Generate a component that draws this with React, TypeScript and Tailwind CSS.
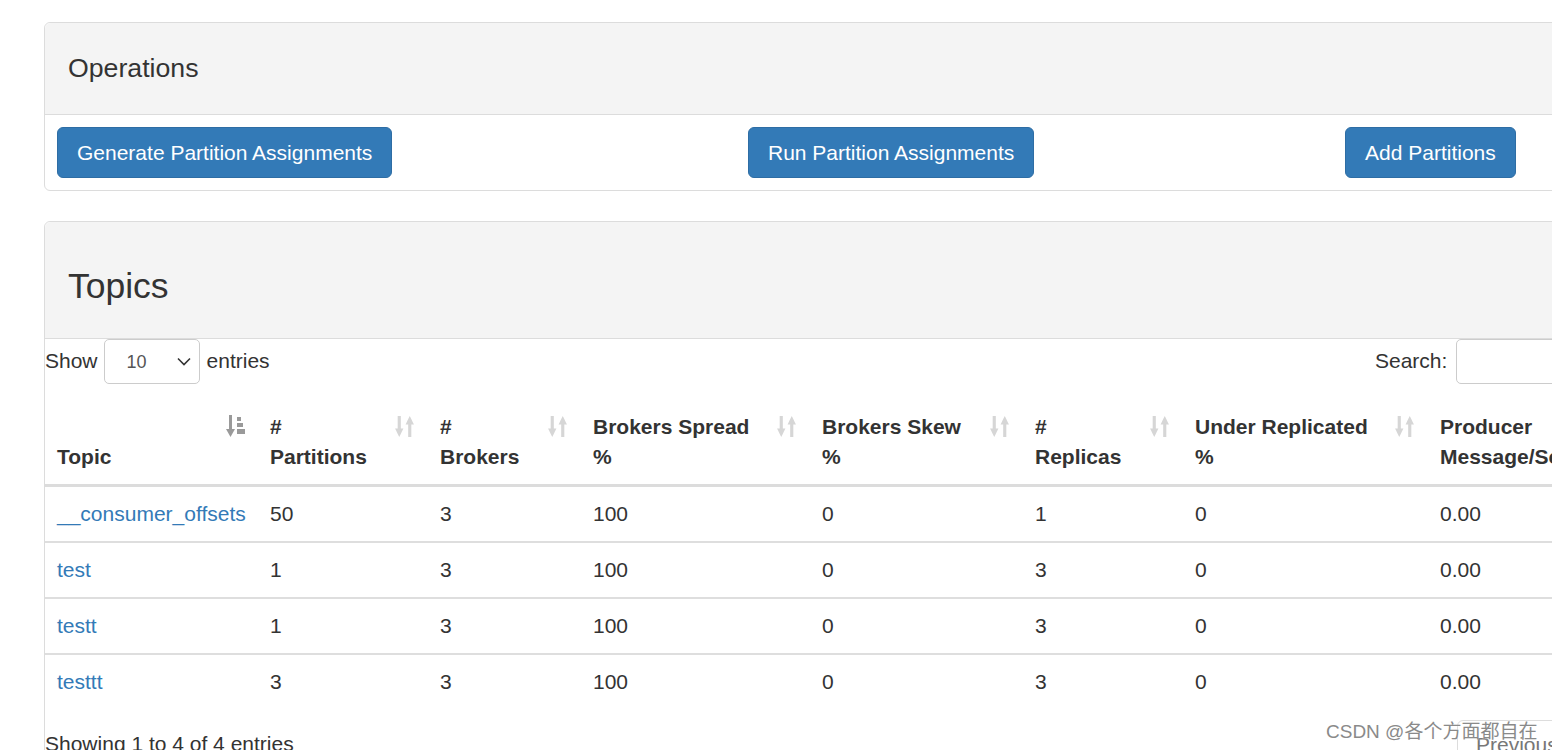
import React from 'react';

const topics = [
  { name: '__consumer_offsets', partitions: 50, brokers: 3, spread: 100, skew: 0, replicas: 1, under: 0, producer: '0.00' },
  { name: 'test', partitions: 1, brokers: 3, spread: 100, skew: 0, replicas: 3, under: 0, producer: '0.00' },
  { name: 'testt', partitions: 1, brokers: 3, spread: 100, skew: 0, replicas: 3, under: 0, producer: '0.00' },
  { name: 'testtt', partitions: 3, brokers: 3, spread: 100, skew: 0, replicas: 3, under: 0, producer: '0.00' },
];

const SortIcon = () => (
  <svg width="19" height="21" viewBox="0 0 18 20" fill="#d6d6d6" className="absolute top-[16px] right-[14px]">
    <rect x="2.5" y="0" width="3" height="13" />
    <polygon points="0,12 8,12 4,20" />
    <polygon points="10,8 18,8 14,0" />
    <rect x="12.5" y="7" width="3" height="13" />
  </svg>
);

const SortActiveIcon = () => (
  <svg width="20" height="22" viewBox="0 0 20 22" fill="#9a9a9a" className="absolute top-[15px] right-[12px]">
    <rect x="3" y="0" width="3" height="15" />
    <polygon points="0,14 9,14 4.5,22" />
    <rect x="11" y="2" width="4" height="4" />
    <rect x="11" y="8" width="6" height="4" />
    <rect x="11" y="14" width="8" height="5" />
  </svg>
);

const Button = ({ children }: { children: React.ReactNode }) => (
  <button className="h-[51px] px-[19px] rounded-[6px] bg-[#337ab7] border border-[#2e6da4] text-white text-[21px] leading-[30px] whitespace-nowrap">
    {children}
  </button>
);

const headers: { label: React.ReactNode; width: string; active?: boolean }[] = [
  { label: 'Topic', width: 'w-[213px]', active: true },
  { label: <>#<br />Partitions</>, width: 'w-[170px]' },
  { label: <>#<br />Brokers</>, width: 'w-[153px]' },
  { label: <>Brokers Spread<br />%</>, width: 'w-[229px]' },
  { label: <>Brokers Skew<br />%</>, width: 'w-[213px]' },
  { label: <>#<br />Replicas</>, width: 'w-[160px]' },
  { label: <>Under Replicated<br />%</>, width: 'w-[245px]' },
  { label: <>Producer<br />Message/Sec</>, width: 'w-[230px]' },
  { label: <>Summed Recent<br />Offsets</>, width: 'w-[230px]' },
];

const App = () => {
  return (
    <div className="relative w-[1552px] h-[750px] overflow-hidden bg-white text-[#333] font-['Liberation_Sans',Arial,sans-serif]">
      <div className="pt-[22px] pl-[44px]">
        {/* Operations */}
        <div className="w-[1662px] border border-[#dcdcdc] rounded-[6px] mb-[30px]">
          <div className="h-[92px] bg-[#f4f4f4] border-b border-[#dcdcdc] rounded-t-[6px] flex items-center px-[23px]">
            <h3 className="text-[26.7px] leading-[1.1]">Operations</h3>
          </div>
          <div className="grid grid-cols-[691px_597px_1fr]">
            <div className="p-[12px]"><Button>Generate Partition Assignments</Button></div>
            <div className="p-[12px]"><Button>Run Partition Assignments</Button></div>
            <div className="p-[12px]"><Button>Add Partitions</Button></div>
          </div>
        </div>

        {/* Topics */}
        <div className="w-[1662px] border border-[#dcdcdc] rounded-[6px]">
          <div className="h-[117px] bg-[#f4f4f4] border-b border-[#dcdcdc] rounded-t-[6px] px-[23px] pt-[45px]">
            <h3 className="text-[35.5px] leading-[1.1]">Topics</h3>
          </div>

          <div className="grid grid-cols-[1330px_1fr] h-[45px] text-[21px] leading-[30px]">
            <div className="flex items-center -mt-[2px]">
              <span>Show</span>
              <div className="ml-[6px] mt-[2px] w-[96px] h-[45px] border border-[#ccc] rounded-[5px] flex items-center justify-between pl-[22px] pr-[8px]">
                <span className="text-[18px] text-[#555]">10</span>
                <svg width="14" height="9" viewBox="0 0 14 9" fill="none" stroke="#333" strokeWidth="1.6">
                  <polyline points="1,1.5 7,7.5 13,1.5" />
                </svg>
              </div>
              <span className="ml-[7px]">entries</span>
            </div>
            <div className="flex items-center -mt-[2px]">
              <span>Search:</span>
              <div className="ml-[9px] mt-[2px] w-[240px] h-[45px] border border-[#ccc] rounded-[5px]" />
            </div>
          </div>

          <table className="mt-[16px] table-fixed border-separate border-spacing-0 w-[1843px] text-[21px] leading-[30px]">
            <thead>
              <tr>
                {headers.map((h, i) => (
                  <th
                    key={i}
                    className={`${h.width} relative text-left align-bottom font-bold pl-[12px] pr-[30px] py-[12px] border-b-[3px] border-[#dcdcdc]`}
                  >
                    {h.label}
                    {h.active ? <SortActiveIcon /> : <SortIcon />}
                  </th>
                ))}
              </tr>
            </thead>
            <tbody>
              {topics.map((t, i) => {
                const cell = `px-[12px] py-[12px] ${i > 0 ? 'border-t-2 border-[#dedede]' : ''}`;
                return (
                  <tr key={t.name}>
                    <td className={cell}><a className="text-[#337ab7]">{t.name}</a></td>
                    <td className={cell}>{t.partitions}</td>
                    <td className={cell}>{t.brokers}</td>
                    <td className={cell}>{t.spread}</td>
                    <td className={cell}>{t.skew}</td>
                    <td className={cell}>{t.replicas}</td>
                    <td className={cell}>{t.under}</td>
                    <td className={cell}>{t.producer}</td>
                    <td className={cell}>0</td>
                  </tr>
                );
              })}
            </tbody>
          </table>

          <div className="grid grid-cols-[1412px_1fr] mt-[8px] text-[21px] leading-[30px]">
            <div className="pt-[12px]">Showing 1 to 4 of 4 entries</div>
            <div className="mt-[3px] flex">
              <span className="px-[18px] py-[9px] border border-[#ddd] rounded-l-[6px] text-[#777]">Previous</span>
              <span className="px-[18px] py-[9px] border border-l-0 border-[#337ab7] bg-[#337ab7] text-white">1</span>
              <span className="px-[18px] py-[9px] border border-l-0 border-[#ddd] rounded-r-[6px] text-[#777]">Next</span>
            </div>
          </div>
        </div>
      </div>

      <div className="absolute left-[1326px] top-[720px] text-[19px] leading-[24px] text-[#8a8a8a] whitespace-nowrap font-['Liberation_Sans','Noto_Sans_CJK_SC',sans-serif] [text-shadow:0_0_2px_#fff]">
        CSDN @各个方面都自在
      </div>
    </div>
  );
};

export default App;
